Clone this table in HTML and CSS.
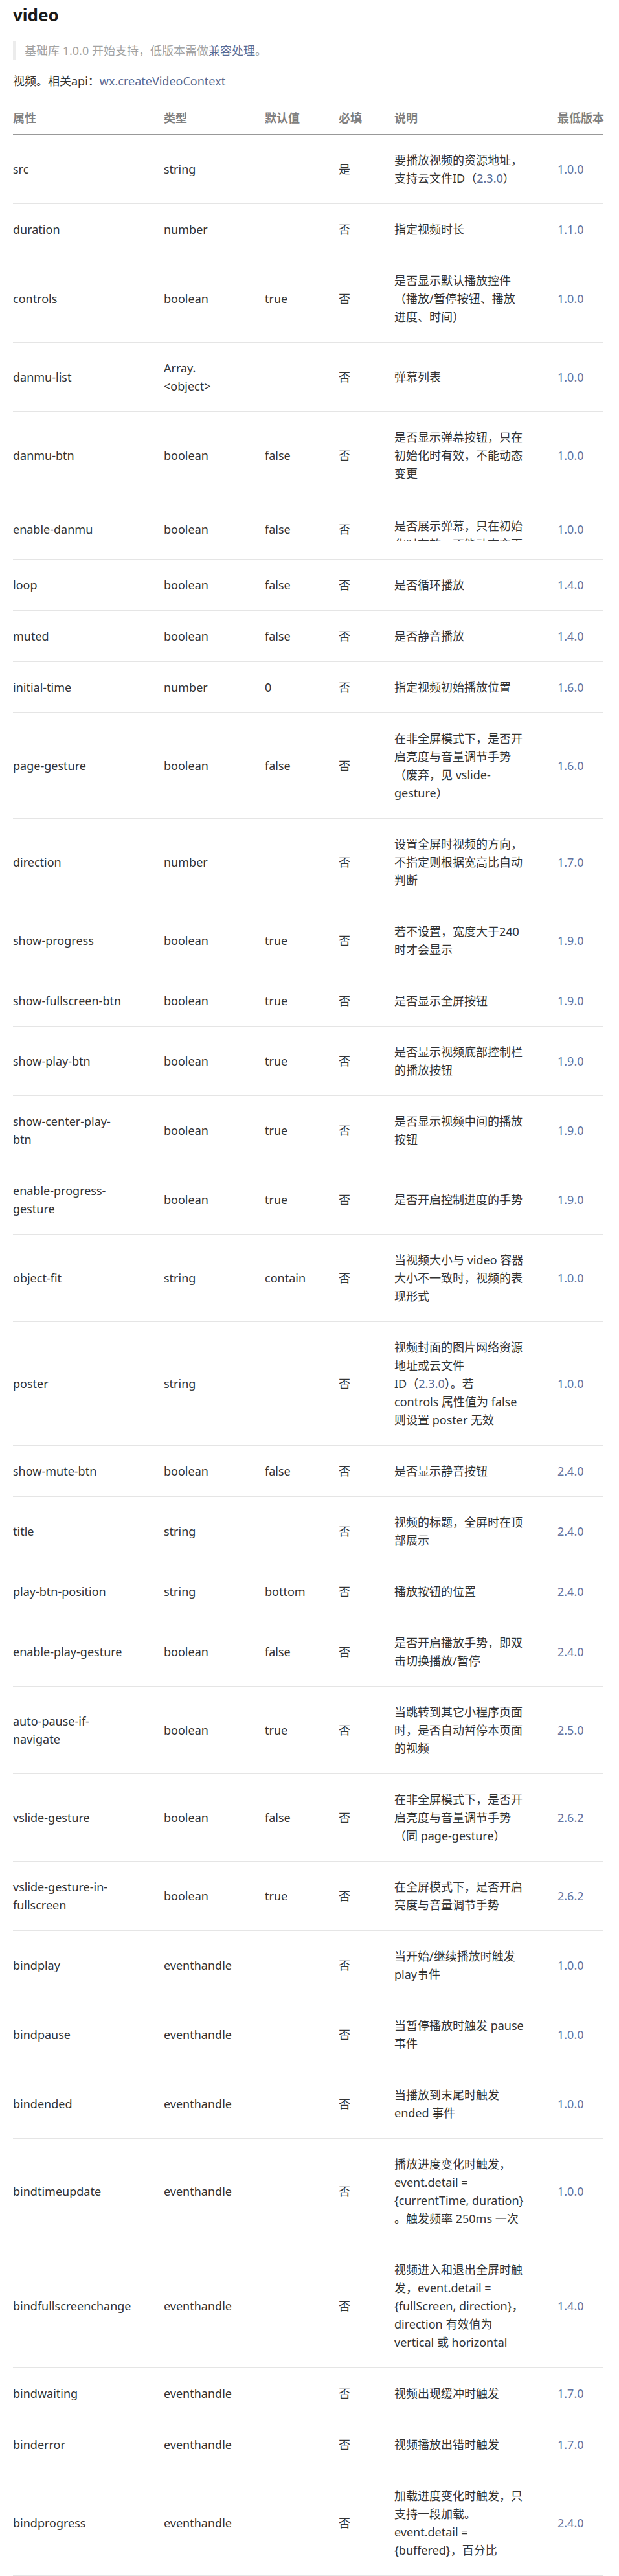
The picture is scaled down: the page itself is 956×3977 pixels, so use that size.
FILE: index.html
```html
<!DOCTYPE html>
<html lang="zh-CN">
<head>
<meta charset="utf-8">
<title>video</title>
<link rel="stylesheet" href="styles.css">
</head>
<body>
<main class="page">
  <h1 class="title">video</h1>
  <blockquote class="note">基础库 1.0.0 开始支持，低版本需做<a class="link" href="#">兼容处理</a>。</blockquote>
  <p class="intro">视频。相关api：<a class="link" href="#">wx.createVideoContext</a></p>
  <table class="props">
    <colgroup>
      <col class="col-name"><col class="col-type"><col class="col-def"><col class="col-req"><col class="col-desc"><col class="col-ver">
    </colgroup>
    <thead>
      <tr><th>属性</th><th>类型</th><th>默认值</th><th>必填</th><th>说明</th><th>最低版本</th></tr>
    </thead>
    <tbody>
      <tr><td>src</td><td>string</td><td></td><td>是</td><td>要播放视频的资源地址，<br>支持云文件ID（<a class="link" href="#">2.3.0</a>）</td><td class="ver">1.0.0</td></tr>
      <tr><td>duration</td><td>number</td><td></td><td>否</td><td>指定视频时长</td><td class="ver">1.1.0</td></tr>
      <tr><td>controls</td><td>boolean</td><td>true</td><td>否</td><td>是否显示默认播放控件<br>（播放/暂停按钮、播放<br>进度、时间）</td><td class="ver">1.0.0</td></tr>
      <tr><td>danmu-list</td><td>Array.<br>&lt;object&gt;</td><td></td><td>否</td><td>弹幕列表</td><td class="ver">1.0.0</td></tr>
      <tr><td>danmu-btn</td><td>boolean</td><td>false</td><td>否</td><td>是否显示弹幕按钮，只在<br>初始化时有效，不能动态<br>变更</td><td class="ver">1.0.0</td></tr>
      <tr><td>enable-danmu</td><td>boolean</td><td>false</td><td>否</td><td><div class="clip">是否展示弹幕，只在初始<br>化时有效，不能动态变更</div></td><td class="ver">1.0.0</td></tr>
      <tr><td>loop</td><td>boolean</td><td>false</td><td>否</td><td>是否循环播放</td><td class="ver">1.4.0</td></tr>
      <tr><td>muted</td><td>boolean</td><td>false</td><td>否</td><td>是否静音播放</td><td class="ver">1.4.0</td></tr>
      <tr><td>initial-time</td><td>number</td><td>0</td><td>否</td><td>指定视频初始播放位置</td><td class="ver">1.6.0</td></tr>
      <tr><td>page-gesture</td><td>boolean</td><td>false</td><td>否</td><td>在非全屏模式下，是否开<br>启亮度与音量调节手势<br>（废弃，见 vslide-<br>gesture）</td><td class="ver">1.6.0</td></tr>
      <tr><td>direction</td><td>number</td><td></td><td>否</td><td>设置全屏时视频的方向，<br>不指定则根据宽高比自动<br>判断</td><td class="ver">1.7.0</td></tr>
      <tr><td>show-progress</td><td>boolean</td><td>true</td><td>否</td><td>若不设置，宽度大于240<br>时才会显示</td><td class="ver">1.9.0</td></tr>
      <tr><td>show-fullscreen-btn</td><td>boolean</td><td>true</td><td>否</td><td>是否显示全屏按钮</td><td class="ver">1.9.0</td></tr>
      <tr><td>show-play-btn</td><td>boolean</td><td>true</td><td>否</td><td>是否显示视频底部控制栏<br>的播放按钮</td><td class="ver">1.9.0</td></tr>
      <tr><td>show-center-play-<br>btn</td><td>boolean</td><td>true</td><td>否</td><td>是否显示视频中间的播放<br>按钮</td><td class="ver">1.9.0</td></tr>
      <tr><td>enable-progress-<br>gesture</td><td>boolean</td><td>true</td><td>否</td><td>是否开启控制进度的手势</td><td class="ver">1.9.0</td></tr>
      <tr><td>object-fit</td><td>string</td><td>contain</td><td>否</td><td>当视频大小与 video 容器<br>大小不一致时，视频的表<br>现形式</td><td class="ver">1.0.0</td></tr>
      <tr><td>poster</td><td>string</td><td></td><td>否</td><td>视频封面的图片网络资源<br>地址或云文件<br>ID（<a class="link" href="#">2.3.0</a>）。若<br>controls 属性值为 false<br>则设置 poster 无效</td><td class="ver">1.0.0</td></tr>
      <tr><td>show-mute-btn</td><td>boolean</td><td>false</td><td>否</td><td>是否显示静音按钮</td><td class="ver">2.4.0</td></tr>
      <tr><td>title</td><td>string</td><td></td><td>否</td><td>视频的标题，全屏时在顶<br>部展示</td><td class="ver">2.4.0</td></tr>
      <tr><td>play-btn-position</td><td>string</td><td>bottom</td><td>否</td><td>播放按钮的位置</td><td class="ver">2.4.0</td></tr>
      <tr><td>enable-play-gesture</td><td>boolean</td><td>false</td><td>否</td><td>是否开启播放手势，即双<br>击切换播放/暂停</td><td class="ver">2.4.0</td></tr>
      <tr><td>auto-pause-if-<br>navigate</td><td>boolean</td><td>true</td><td>否</td><td>当跳转到其它小程序页面<br>时，是否自动暂停本页面<br>的视频</td><td class="ver">2.5.0</td></tr>
      <tr><td>vslide-gesture</td><td>boolean</td><td>false</td><td>否</td><td>在非全屏模式下，是否开<br>启亮度与音量调节手势<br>（同 page-gesture）</td><td class="ver">2.6.2</td></tr>
      <tr><td>vslide-gesture-in-<br>fullscreen</td><td>boolean</td><td>true</td><td>否</td><td>在全屏模式下，是否开启<br>亮度与音量调节手势</td><td class="ver">2.6.2</td></tr>
      <tr><td>bindplay</td><td>eventhandle</td><td></td><td>否</td><td>当开始/继续播放时触发<br>play事件</td><td class="ver">1.0.0</td></tr>
      <tr><td>bindpause</td><td>eventhandle</td><td></td><td>否</td><td>当暂停播放时触发 pause<br>事件</td><td class="ver">1.0.0</td></tr>
      <tr><td>bindended</td><td>eventhandle</td><td></td><td>否</td><td>当播放到末尾时触发<br>ended 事件</td><td class="ver">1.0.0</td></tr>
      <tr><td>bindtimeupdate</td><td>eventhandle</td><td></td><td>否</td><td>播放进度变化时触发，<br>event.detail =<br>{currentTime, duration}<br>。触发频率 250ms 一次</td><td class="ver">1.0.0</td></tr>
      <tr><td>bindfullscreenchange</td><td>eventhandle</td><td></td><td>否</td><td>视频进入和退出全屏时触<br>发，event.detail =<br>{fullScreen, direction}，<br>direction 有效值为<br>vertical 或 horizontal</td><td class="ver">1.4.0</td></tr>
      <tr><td>bindwaiting</td><td>eventhandle</td><td></td><td>否</td><td>视频出现缓冲时触发</td><td class="ver">1.7.0</td></tr>
      <tr><td>binderror</td><td>eventhandle</td><td></td><td>否</td><td>视频播放出错时触发</td><td class="ver">1.7.0</td></tr>
      <tr><td>bindprogress</td><td>eventhandle</td><td></td><td>否</td><td>加载进度变化时触发，只<br>支持一段加载。<br>event.detail =<br>{buffered}，百分比</td><td class="ver">2.4.0</td></tr>
    </tbody>
  </table>
</main>
</body>
</html>
```

FILE: styles.css
```css
html, body {
  margin: 0;
  padding: 0;
  background: #ffffff;
}

body {
  font-family: "Noto Sans", "Noto Sans CJK SC", sans-serif;
  font-size: 18px;
  line-height: 28px;
  color: #333333;
}

.page {
  padding: 5px 24px 0 20px;
}

.title {
  margin: 0;
  font-size: 26px;
  line-height: 36px;
  font-weight: 700;
  color: #1a1a1a;
}

.note {
  margin: 23px 0 0;
  padding: 0 0 0 14px;
  border-left: 4px solid #ececec;
  color: #a3a3a3;
}

.link {
  color: #576b95;
  text-decoration: none;
}

.intro {
  margin: 19px 0 0;
}

.props {
  margin-top: 18px;
  width: 912px;
  table-layout: fixed;
  border-collapse: collapse;
}

.col-name { width: 233px; }
.col-type { width: 156px; }
.col-def { width: 114px; }
.col-req { width: 86px; }
.col-desc { width: 252px; }
.col-ver { width: 71px; }

.props th {
  padding: 11px 0;
  text-align: left;
  font-weight: 700;
  color: #808080;
  white-space: nowrap;
  border-bottom: 1px solid #999999;
}

.props td {
  padding: 25px 0;
  vertical-align: middle;
  border-bottom: 1px solid #e5e5e5;
  white-space: nowrap;
}

.props .ver {
  color: #6473a0;
}

.clip {
  height: 38px;
  margin-top: 2px;
  margin-bottom: 2px;
  overflow: hidden;
}
```
